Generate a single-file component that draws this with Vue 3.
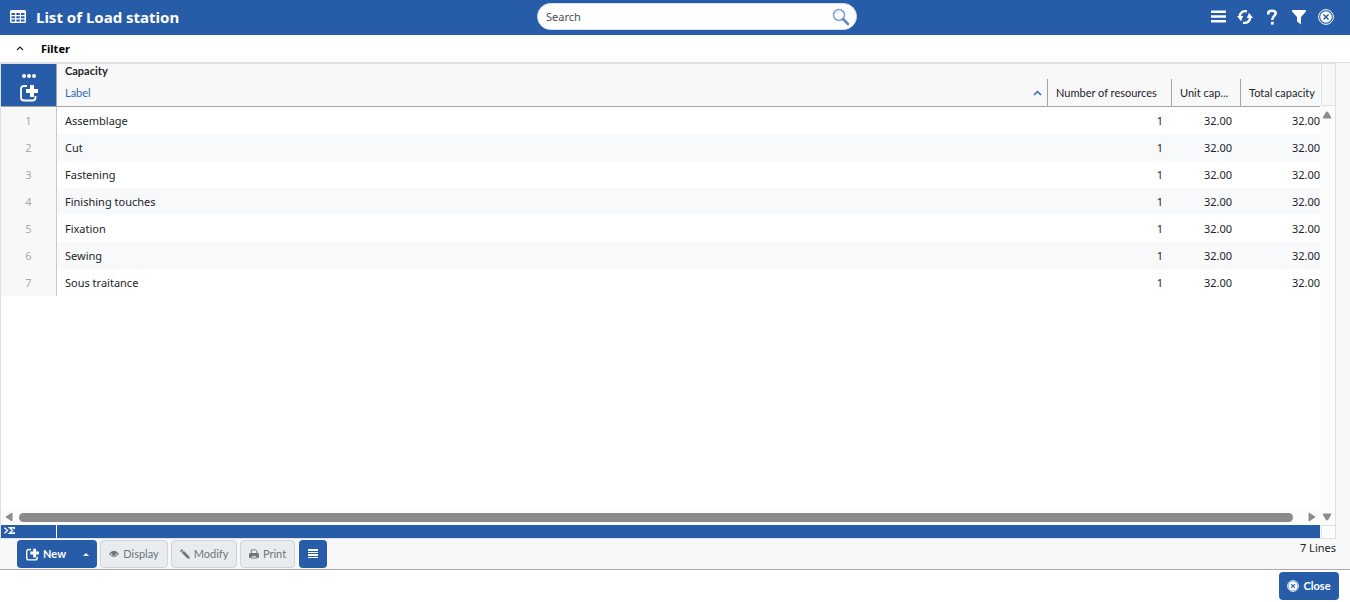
<script setup>
import { ref } from 'vue'

const search = ref('')
const rows = ['Assemblage', 'Cut', 'Fastening', 'Finishing touches', 'Fixation', 'Sewing', 'Sous traitance']
</script>

<template>
  <div class="page">
    <header class="topbar">
      <div class="heading">
        <svg class="grid-icon" width="16" height="13" viewBox="0 0 16 13" aria-hidden="true">
          <rect x="0" y="0" width="16" height="13" rx="1.500" fill="#fff" />
          <path d="M1.500 3H5v2H1.500zM6.300 3h3.500v2H6.300zM11 3h3.500v2H11zM1.500 6.200H5v2H1.500zM6.300 6.200h3.500v2H6.300zM11 6.200h3.500v2H11zM1.500 9.400H5v2H1.500zM6.300 9.400h3.500v2H6.300zM11 9.400h3.500v2H11z" fill="#275da8" />
        </svg>
        <h1>List of Load station</h1>
      </div>
      <div class="search">
        <input v-model="search" type="text" placeholder="Search" aria-label="Search" />
        <button class="plain" type="button" aria-label="Run search">
          <svg width="18" height="18" viewBox="0 0 18 18" fill="none">
            <circle cx="7" cy="7" r="5.500" stroke="#7c9dd0" stroke-width="1.500" />
            <path d="M4 6a3.500 3.500 0 0 1 3-2.500" stroke="#c5d4ea" />
            <path d="M11 11l5 5" stroke="#5f88c5" stroke-width="2.600" stroke-linecap="round" />
          </svg>
        </button>
      </div>
      <nav class="actions" aria-label="Page actions">
        <button class="plain" type="button" aria-label="Menu">
          <svg width="16" height="16" viewBox="0 0 16 16" fill="#fff"><path d="M1 1.500h15V4H1zM1 6.300h15v2.500H1zM1 11.100h15v2.500H1z" /></svg>
        </button>
        <button class="plain" type="button" aria-label="Refresh">
          <svg width="16" height="16" viewBox="0 0 16 16" fill="none" stroke="#fff" stroke-width="2.400">
            <path d="M10 2.400C6 1.200 2.600 4 2.700 8" />
            <path d="M6 13.600C10 14.800 13.400 12 13.300 8" />
            <path d="M0 7h6.200L4 12.300zM16 9H9.800L12 3.700z" fill="#fff" stroke="none" />
          </svg>
        </button>
        <button class="plain" type="button" aria-label="Help">
          <svg width="16" height="16" viewBox="0 0 16 16" fill="none" stroke="#fff" stroke-width="2.600">
            <path d="M4.300 5.500V3.800C4.300 1 11.700 1 11.700 4.300 11.700 7 8.300 7 8.300 11" /><path d="M6.900 12.800h2.800v2.800H6.900z" fill="#fff" stroke="none" />
          </svg>
        </button>
        <button class="plain" type="button" aria-label="Filter">
          <svg width="16" height="16" viewBox="0 0 16 16" fill="#fff"><path d="M1 1h14v1.500L10 8v7.500L6 12.500V8L1 2.500z" /></svg>
        </button>
        <button class="plain" type="button" aria-label="Close page">
          <svg width="16" height="16" viewBox="0 0 16 16"><circle cx="8" cy="8" r="7.400" fill="#275da8" stroke="#fff" /><circle cx="8" cy="8" r="5.800" fill="#fff" /><path d="M5.500 5.500l5 5M10.500 5.500l-5 5" stroke="#275da8" stroke-width="1.500" /></svg>
        </button>
      </nav>
    </header>

    <button class="filter-bar" type="button">
      <svg width="8" height="5" viewBox="0 0 8 5" fill="none" stroke="#222" stroke-width="1.200"><path d="M1 4l3-3 3 3" /></svg>
      <span>Filter</span>
    </button>

    <main class="content">
      <section class="grid-panel">
        <div class="grid-main">
          <div class="table-area">
            <table>
              <colgroup>
                <col class="c-index" /><col /><col class="c-number" /><col class="c-unit" /><col class="c-total" />
              </colgroup>
              <thead>
                <tr class="group-row">
                  <td class="corner" rowspan="2">
                    <div class="corner-tools">
                      <button class="plain" type="button" aria-label="Grid options">
                        <svg width="14" height="4" viewBox="0 0 14 4" fill="#fff"><circle cx="2" cy="2" r="2" /><circle cx="7" cy="2" r="2" /><circle cx="12" cy="2" r="2" /></svg>
                      </button>
                      <button class="plain" type="button" aria-label="Add line">
                        <svg width="18" height="18" viewBox="0 0 18 18" fill="none">
                          <path d="M7 2H4Q1 2 1 5v8.500q0 3 3 3h8.500q3 0 3-3V12" stroke="#fff" stroke-width="1.800" />
                          <path d="M10 1h4v4h4v4h-4v4h-4V9H6V5h4z" fill="#fff" />
                        </svg>
                      </button>
                    </div>
                  </td>
                  <th colspan="4" scope="colgroup">Capacity</th>
                </tr>
                <tr class="label-row">
                  <th scope="col" class="sorted" aria-sort="ascending">
                    <div>Label
                      <svg width="9" height="6" viewBox="0 0 9 6" fill="none" stroke="#2f68bd" stroke-width="1.500"><path d="M1 5l3.500-3.500L8 5" /></svg>
                    </div>
                  </th>
                  <th scope="col" class="divided">Number of resources</th>
                  <th scope="col" class="divided">Unit cap...</th>
                  <th scope="col" class="divided">Total capacity</th>
                </tr>
              </thead>
              <tbody>
                <tr v-for="(name, i) in rows" :key="name">
                  <td class="index">{{ i + 1 }}</td>
                  <td>{{ name }}</td>
                  <td class="num">1</td>
                  <td class="num">32.00</td>
                  <td class="num total">32.00</td>
                </tr>
              </tbody>
            </table>
          </div>
          <div class="hscroll" aria-hidden="true">
            <svg width="8" height="10" viewBox="0 0 8 10" fill="#8b8b8b"><path d="M7 1v8L1 5z" stroke="#8b8b8b" stroke-linejoin="round" /></svg>
            <div class="thumb"></div>
            <svg width="8" height="10" viewBox="0 0 8 10" fill="#8b8b8b"><path d="M1 1v8l6-4z" stroke="#8b8b8b" stroke-linejoin="round" /></svg>
          </div>
          <div class="summary">
            <div class="summary-index">
              <svg width="11" height="7" viewBox="0 0 11 7" fill="none" stroke="#fff" stroke-width="1.400"><path d="M.5.700L3.500 3.500.500 6.300M10.300 2V.700H5.500l3 2.800-3 2.800h4.800V5" /></svg>
            </div>
          </div>
        </div>
        <div class="vscroll" aria-hidden="true">
          <div class="vhead"></div>
          <div class="vtrack">
            <svg width="10" height="8" viewBox="0 0 10 8" fill="#8b8b8b"><path d="M1 7h8L5.500 1h-1z" stroke="#8b8b8b" stroke-linejoin="round" /></svg>
            <svg width="10" height="8" viewBox="0 0 10 8" fill="#8b8b8b"><path d="M1 1h8L5.500 7h-1z" stroke="#8b8b8b" stroke-linejoin="round" /></svg>
          </div>
          <div class="vfoot"></div>
        </div>
      </section>

      <div class="toolbar">
        <div class="split">
          <button class="btn primary main" type="button">
            <svg width="13" height="13" viewBox="0 0 18 18" fill="none">
              <path d="M7 2H4Q1 2 1 5v8.500q0 3 3 3h8.500q3 0 3-3V12" stroke="#fff" stroke-width="1.900" />
              <path d="M10 1h4v4h4v4h-4v4h-4V9H6V5h4z" fill="#fff" />
            </svg>
            New
          </button>
          <button class="btn primary caret" type="button" aria-label="More new options">
            <svg width="6" height="3" viewBox="0 0 6 3" fill="#fff"><path d="M0 3l3-3 3 3z" /></svg>
          </button>
        </div>
        <button class="btn muted w-display" type="button" disabled>
          <svg width="10" height="8" viewBox="0 0 11 8"><path d="M0 4Q5.500-3 11 4 5.500 10.500 0 4z" fill="#6c757d" /><path d="M1.500 4.200Q5.500 0 9.500 4.200 5.500 8 1.500 4.200z" fill="#e9ecef" /><circle cx="5.500" cy="3.500" r="2.500" fill="#6c757d" /></svg>
          Display
        </button>
        <button class="btn muted w-modify" type="button" disabled>
          <svg width="10" height="10" viewBox="0 0 10 10" fill="#6c757d"><path d="M0 2l2-2 1.200 1.200-2 2zM1.700 3.700l2-2L9 7l1 3-3-1z" /></svg>
          Modify
        </button>
        <button class="btn muted w-print" type="button" disabled>
          <svg width="10" height="10" viewBox="0 0 11 10"><path d="M2.500 5V.5h5l1 1V5" fill="none" stroke="#6c757d" /><path d="M0 9V5.500Q0 4 1.500 4h8Q11 4 11 5.500V9z" fill="#6c757d" /><path d="M2.500 7h6v2.500h-6z" fill="#e9ecef" stroke="#6c757d" /></svg>
          Print
        </button>
        <button class="btn primary menu" type="button" aria-label="More actions">
          <svg width="10" height="10" viewBox="0 0 10 10" fill="#fff"><path d="M0 0h10v2H0zM0 3h10v1H0zM0 5h10v2H0zM0 8h10v1H0z" /></svg>
        </button>
        <span class="count">7 Lines</span>
      </div>
    </main>

    <footer class="footer">
      <button class="btn primary close" type="button">
        <svg width="12" height="12" viewBox="0 0 16 16"><circle cx="8" cy="8" r="7.300" fill="#6f94c8" stroke="#fff" /><circle cx="8" cy="8" r="6" fill="#fff" /><path d="M5.500 5.500l5 5M10.500 5.500l-5 5" stroke="#275da8" stroke-width="1.500" /></svg>
        Close
      </button>
    </footer>
  </div>
</template>

<style>
body { background: #fff; }
</style>

<style scoped>
.page {
  display: flex;
  flex-direction: column;
  height: 100vh;
  box-sizing: border-box;
  font-family: "Noto Sans", "Open Sans", sans-serif;
  font-size: 11px;
  line-height: 16px;
  color: #212529;
}
button, input { font: inherit; }
svg { display: block; flex: none; }
.plain { border: 0; background: none; padding: 0; display: block; cursor: pointer; }

.topbar {
  display: grid;
  grid-template-columns: 1fr 320px 1fr;
  column-gap: 20px;
  align-items: center;
  height: 35px;
  flex: none;
  padding: 0 16px 0 60px;
  box-sizing: border-box;
  background: #275da8;
  color: #fff;
}
.heading { display: flex; align-items: center; gap: 10px; margin-left: -50px; padding-bottom: 2px; }
h1 { margin: 0; font-size: 15px; line-height: 20px; font-weight: 700; white-space: nowrap; }
.search {
  display: flex;
  align-items: center;
  height: 27px;
  box-sizing: border-box;
  margin-bottom: 2px;
  padding: 0 6px 0 8px;
  border: 1px solid #d4dfee;
  border-radius: 14px;
  background: #fff;
}
.search input { flex: 1; min-width: 0; border: 0; padding: 0; outline: 0; background: none; color: #444; }
.search input::placeholder { color: #495057; opacity: 1; }
.actions { display: flex; justify-content: flex-end; gap: 11px; padding-bottom: 1px; }

.filter-bar {
  display: flex;
  align-items: center;
  gap: 17px;
  flex: none;
  height: 27px;
  padding: 0 16px;
  border: 0;
  background: #fff;
  color: #000;
  font-weight: 700;
}

.content {
  flex: 1;
  min-height: 0;
  display: flex;
  flex-direction: column;
  background: #f8f8f8;
  border-top: 1px solid #dee2e6;
  border-bottom: 1px solid #aaa;
}
.grid-panel {
  flex: 1;
  min-height: 0;
  display: flex;
  margin-right: 14px;
  border: 1px solid #dee2e6;
}
.grid-main { flex: 1; min-width: 0; display: flex; flex-direction: column; }
.table-area { flex: 1; min-height: 0; overflow: hidden; background: #fff; }
table { width: 100%; table-layout: fixed; border-collapse: separate; border-spacing: 0; }
.c-index { width: 56px; }
.c-number { width: 124px; }
.c-unit { width: 69px; }
.c-total { width: 80px; }
th, td { padding: 0 8px; text-align: left; white-space: nowrap; }
th { font-family: Lato, "Noto Sans", sans-serif; font-weight: 400; background: #f8f8f8; }
.group-row th { height: 15px; line-height: 13px; font-weight: 700; vertical-align: top; }
.label-row th { height: 27px; border-bottom: 1px solid #a5a5a5; }
.label-row .divided { border-left: 1px solid #a5a5a5; padding-right: 0; }
.label-row .sorted { color: #2f68bd; }
.sorted div { display: flex; align-items: center; justify-content: space-between; margin-right: -3px; }
.corner { padding: 0; background: #275da8; border-right: 1px solid #a5a5a5; border-bottom: 1px solid #a5a5a5; }
.corner-tools { display: flex; flex-direction: column; align-items: center; gap: 6px; padding-top: 6px; }
tbody td { height: 27px; background: #fff; }
tbody tr:nth-child(even) td { background: #f8f9fb; }
tbody tr .index, tbody tr:nth-child(even) .index {
  padding: 0;
  text-align: center;
  color: #a3a8ae;
  background: #f8f8f8;
  border-right: 1px solid #c9c9c9;
}
.num { text-align: right; }
.total { padding-right: 0; }

.hscroll { display: flex; align-items: center; gap: 6px; height: 16px; padding: 0 4px; background: #fcfcfc; }
.thumb { flex: 1; height: 9px; margin-right: 9px; border-radius: 5px; background: #8b8b8b; }
.summary { height: 13px; background: #275da8; }
.summary-index { width: 52px; height: 11px; padding: 2px 0 0 3px; border-right: 1px solid #fff; }

.vscroll { width: 15px; flex: none; display: flex; flex-direction: column; background: #fcfcfc; }
.vhead { height: 41px; margin-left: 1px; border-left: 1px solid #dee2e6; border-bottom: 1px solid #dee2e6; background: #f8f8f8; }
.vtrack { flex: 1; display: flex; flex-direction: column; justify-content: space-between; padding: 5px 0 4px 2px; }
.vfoot { height: 12px; margin-left: 1px; border-left: 1px solid #dee2e6; border-top: 1px solid #dee2e6; }

.toolbar { display: flex; align-items: flex-start; gap: 3px; height: 29px; padding: 1px 14px 0 17px; }
.split { display: flex; }
.btn {
  display: flex;
  align-items: center;
  justify-content: center;
  gap: 4px;
  height: 28px;
  box-sizing: border-box;
  padding: 0 8px;
  border: 1px solid transparent;
  border-radius: 4px;
  white-space: nowrap;
  font-family: Lato, "Noto Sans", sans-serif;
}
.primary { background: #275da8; color: #fff; font-weight: 700; }
.main { width: 58px; border-radius: 4px 0 0 4px; }
.caret { width: 22px; border-radius: 0 4px 4px 0; }
.muted { background: #e9ecef; color: #6c757d; border-color: #ced4da; }
.w-display { width: 68px; }
.w-modify { width: 66px; }
.w-print { width: 55px; }
.menu { width: 28px; margin-left: 1px; }
.count { margin-left: auto; }

.footer { display: flex; justify-content: flex-end; flex: none; height: 32px; box-sizing: border-box; padding: 2px 11px 0; background: #fff; }
.close { width: 60px; }
</style>
